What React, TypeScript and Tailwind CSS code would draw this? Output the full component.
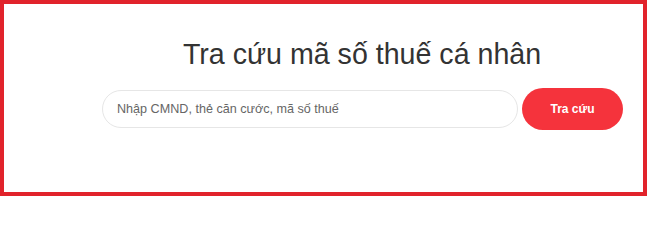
import React, { useState } from 'react'

export default function App() {
  const [query, setQuery] = useState('')

  return (
    <div className="w-[650px] h-[201px] bg-white" style={{ fontFamily: '"Liberation Sans", Arial, sans-serif' }}>
      <div className="w-[647px] h-[196px] border-4 border-[#e1232b] bg-white">
        <div className="pl-[98px] pt-[33px] w-[525px] box-content">
          <h1 className="text-center text-[28.6px] leading-[34px] text-[#333] font-normal pr-[5px]">
            Tra cứu mã số thuế cá nhân
          </h1>
          <div className="flex items-center gap-[4px] mt-[17px]">
            <input
              type="text"
              value={query}
              onChange={(e) => setQuery(e.target.value)}
              placeholder="Nhập CMND, thẻ căn cước, mã số thuế"
              className="w-[416px] h-[38px] rounded-full border border-[#e6e6e6] px-[14px] text-[12.6px] text-[#555] placeholder:text-[#666] outline-none"
            />
            <button className="w-[101px] h-[42px] rounded-full bg-[#f5333c] text-white text-[12px] font-bold">
              Tra cứu
            </button>
          </div>
        </div>
      </div>
    </div>
  )
}
